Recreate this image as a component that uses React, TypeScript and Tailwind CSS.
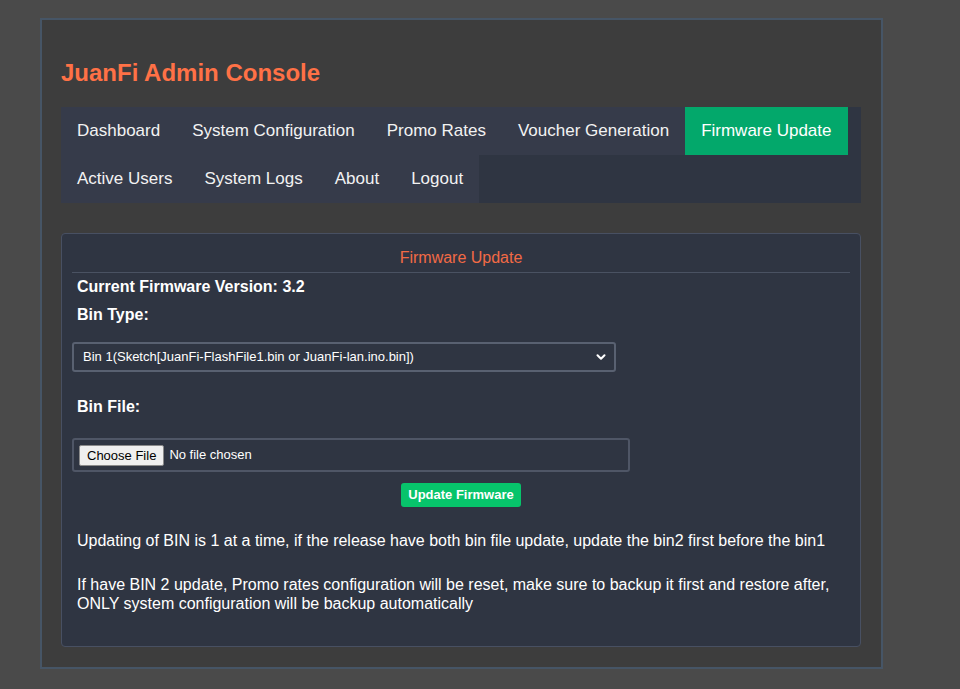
import { ChevronDown } from 'lucide-react';

const navItems = [
  'Dashboard',
  'System Configuration',
  'Promo Rates',
  'Voucher Generation',
  'Firmware Update',
  'Active Users',
  'System Logs',
  'About',
  'Logout',
];

export default function App() {
  return (
    <div className="min-h-[689px] bg-[#4a4a4a] pt-[18px] pl-[40px] font-['Liberation_Sans',Arial,sans-serif]">
      <div className="w-[843px] border-2 border-[#465566] bg-[#3d3d3d] px-[19px] pt-[39px] pb-[20px]">
        <h2 className="text-[24px] leading-[28px] font-bold text-[#ff7146]">JuanFi Admin Console</h2>

        {/* nav */}
        <ul className="mt-[20px] flex w-[800px] flex-wrap bg-[#2f3542]">
          {navItems.map((item) => (
            <li
              key={item}
              className={
                item === 'Firmware Update'
                  ? 'bg-[#03a86b] px-4 py-[14px] text-[17px] leading-[20px] text-white'
                  : 'bg-[#363b4a] px-4 py-[14px] text-[17px] leading-[20px] text-[#f2f2f2]'
              }
            >
              {item}
            </li>
          ))}
        </ul>

        {/* firmware panel */}
        <div className="mt-[30px] w-[800px] rounded-[4px] border border-[#485062] bg-[#2f3542] px-[10px] pt-[14px] pb-[33px]">
          <h3 className="border-b border-[#4a5262] pb-[4px] text-center text-[16px] leading-[20px] text-[#f26a45]">
            Firmware Update
          </h3>

          <div className="px-[5px] text-white">
            <p className="mt-[5px] text-[16px] leading-[18px] font-bold">Current Firmware Version: 3.2</p>
            <p className="mt-[10px] text-[16px] leading-[18px] font-bold">Bin Type:</p>
          </div>

          <div className="mt-[18px] flex h-[30px] w-[544px] items-center justify-between rounded-[3px] border-2 border-[#596171] pr-[6px] pl-[9px] text-[13px] text-white">
            <span>Bin 1(Sketch[JuanFi-FlashFile1.bin or JuanFi-lan.ino.bin])</span>
            <ChevronDown size={14} strokeWidth={3.5} />
          </div>

          <p className="mt-[26px] px-[5px] text-[16px] leading-[18px] font-bold text-white">Bin File:</p>

          <div className="mt-[22px] flex h-[34px] w-[558px] items-center rounded-[3px] border-2 border-[#4f5666] pl-[5px] text-[13px]">
            <span className="rounded-[2px] border border-[#8a8a8a] bg-[#efefef] px-[7px] py-[1px] leading-[17px] text-black">
              Choose File
            </span>
            <span className="ml-[5px] text-white">No file chosen</span>
          </div>

          <div className="mt-[11px] flex justify-center">
            <button className="h-[24px] rounded-[3px] bg-[#07c46b] px-[7px] text-[13px] font-semibold text-white">
              Update Firmware
            </button>
          </div>

          <div className="px-[5px] text-[16px] leading-[19px] text-white">
            <p className="mt-[24px]">
              Updating of BIN is 1 at a time, if the release have both bin file update, update the bin2 first before the bin1
            </p>
            <p className="mt-[25px]">
              If have BIN 2 update, Promo rates configuration will be reset, make sure to backup it first and restore after, ONLY system configuration will be backup automatically
            </p>
          </div>
        </div>
      </div>
    </div>
  );
}
